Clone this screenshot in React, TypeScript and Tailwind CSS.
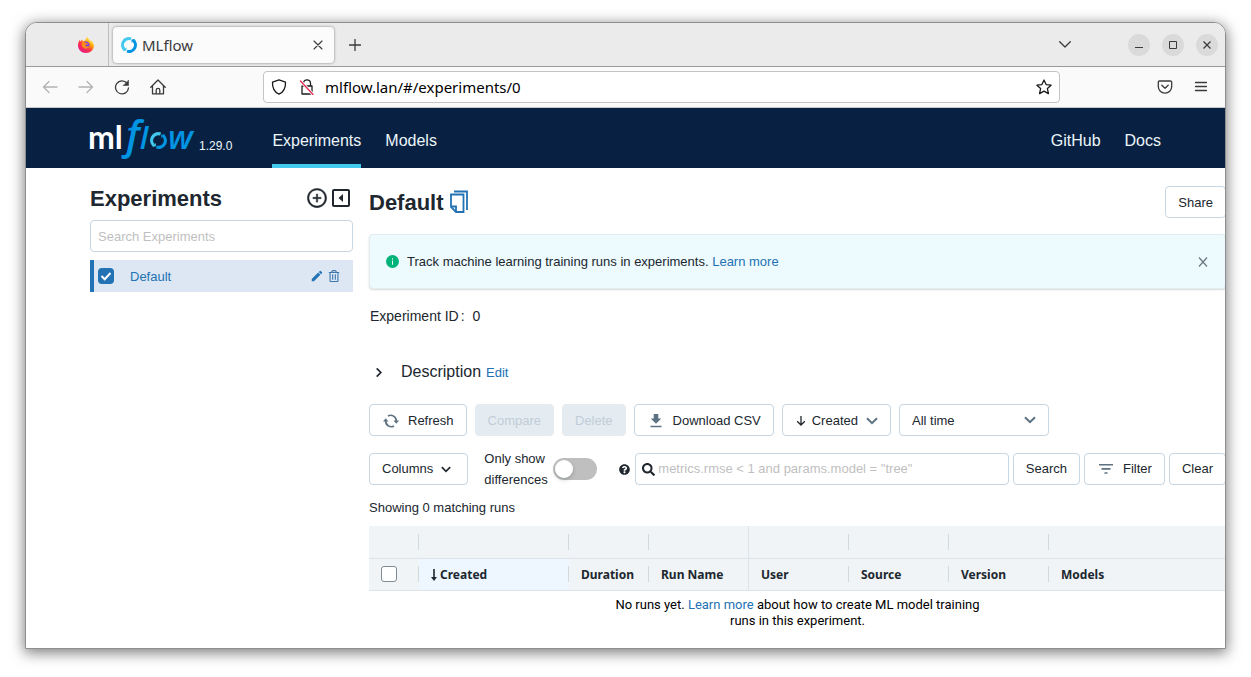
import React from "react";
import { AiOutlinePlusCircle } from "react-icons/ai";
import { FaQuestionCircle, FaRegTrashAlt, FaSearch } from "react-icons/fa";
import { MdEdit } from "react-icons/md";

type IconProps = { className?: string };

const stroke = {
  fill: "none",
  stroke: "currentColor",
  strokeLinecap: "round",
  strokeLinejoin: "round",
} as const;

function FirefoxLogo() {
  return (
    <svg viewBox="0 0 32 32" className="size-4" aria-hidden="true">
      <defs>
        <linearGradient id="ff-body" x1="0.85" y1="0.1" x2="0.2" y2="0.95">
          <stop offset="0.05" stopColor="#fff44f" />
          <stop offset="0.35" stopColor="#ff980e" />
          <stop offset="0.6" stopColor="#ff3647" />
          <stop offset="1" stopColor="#e31587" />
        </linearGradient>
      </defs>
      <path
        d="M30 12c-1-3-3-5-5-6 1 2 1 3 1 4C24 5 20 4 19 0c-3 2-4 5-4 7-2 0-4 1-5 2-1-1-1-3-1-4-2 1-3 3-4 4-1-1-1-3-1-4C1 9 0 13 0 17c0 8 7 15 16 15s16-7 16-15c0-2-1-4-2-5z"
        fill="url(#ff-body)"
      />
      <circle cx="16" cy="16" r="7" fill="#7542e5" />
      <path d="M8 11c3-2 6-1 8 1l5 1c-1 2-3 2-5 2-2 1-1 4 2 4 2 0 3-1 5-1-1 4-5 6-9 5-5-1-8-6-6-12z" fill="#ff8a16" />
    </svg>
  );
}

function RingShapes() {
  return (
    <>
      <g fill="none" strokeWidth="6">
        <path d="M7.500 25.500A12.700 12.700 0 0 1 20 3.900" stroke="#43c9ed" />
        <path d="M24.500 6.500A12.700 12.700 0 0 1 12 28.100" stroke="#0194e2" />
      </g>
      <path d="M11 20.500v6.500l-6.500 1z" fill="#43c9ed" />
      <path d="M21 11.500V5l6.500-1z" fill="#0194e2" />
    </>
  );
}

function MlflowRing({ className }: IconProps) {
  return (
    <svg viewBox="0 0 32 32" className={className} aria-hidden="true">
      <RingShapes />
    </svg>
  );
}

function MlflowWordmark() {
  return (
    <svg viewBox="0 0 106 44" className="h-11 w-[106px] overflow-visible" role="img" aria-label="mlflow">
      <text x="-2" y="33" fontFamily="Lato, sans-serif" fontWeight="700" fontSize="32" fill="#fff">
        ml
      </text>
      <g fontFamily="'Open Sans', sans-serif" fontStyle="italic" fontWeight="600" fill="#0194e2">
        <text x="36" y="33">
          <tspan fontSize="40">f</tspan>
          <tspan fontSize="31">l</tspan>
        </text>
        <text x="78" y="33" fontSize="33">
          w
        </text>
      </g>
      <svg x="60" y="16" width="17" height="17" viewBox="0 0 32 32">
        <RingShapes />
      </svg>
    </svg>
  );
}

function CopyIcon() {
  return (
    <svg viewBox="0 0 20 24" className="h-6 w-5" fill="none" stroke="#2272b4" strokeWidth="1.8" aria-hidden="true">
      <path d="M5 1.500h13V20" />
      <path d="M2 4.500h12.500v17.500H7l-5-5z" />
      <path d="M2 16.500h5V22" />
    </svg>
  );
}

function RefreshIcon() {
  return (
    <svg viewBox="0 0 16 14" className="h-3.5 w-4" aria-hidden="true">
      <g fill="none" stroke="#5f7281" strokeWidth="1.7">
        <path d="M5 2A5.600 5.600 0 0 1 13.300 7" />
        <path d="M11 12A5.600 5.600 0 0 1 2.700 7" />
      </g>
      <path d="M10.500 6.500H16L13.300 9.800zM0 7.500h5.500L2.700 4.200z" fill="#5f7281" />
    </svg>
  );
}

function DownloadIcon() {
  return (
    <svg viewBox="0 0 12 14" className="h-3.5 w-3" fill="#5f7281" aria-hidden="true">
      <path d="M3.700 0h4.600v4.500h3L6 9.800.7 4.500h3zM.5 11.700h11v1.600H.5z" />
    </svg>
  );
}

function FilterIcon() {
  return (
    <svg viewBox="0 0 14 10" className="h-2.5 w-3.5" fill="#5f7281" aria-hidden="true">
      <path d="M0 0h14v1.600H0zM2.500 4h9v1.700h-9zM5.500 8.200h3v1.600h-3z" />
    </svg>
  );
}

function Chevron({ className }: IconProps) {
  return (
    <svg viewBox="0 0 12 8" className={className} {...stroke} strokeWidth="2" strokeLinecap="butt" strokeLinejoin="miter" aria-hidden="true">
      <path d="M1 1.200l5 5 5-5" />
    </svg>
  );
}

function NavIcon({ children, className }: { children: React.ReactNode; className?: string }) {
  return (
    <svg viewBox="0 0 16 16" className={`size-4 ${className ?? ""}`} {...stroke} strokeWidth="1.3" aria-hidden="true">
      {children}
    </svg>
  );
}

function TabStrip() {
  return (
    <div className="flex h-11 items-center border-b border-[#9a9a9a] bg-[#ebebeb] pr-[7px] text-[#3a3a3a]">
      <div className="flex h-full w-[83px] items-center justify-end border-r border-[#bdbdbd] pr-[14px]">
        <FirefoxLogo />
      </div>
      <div className="ml-1 flex h-9 w-[221px] items-center rounded bg-[#fbfbfb] px-2 shadow-[0_0_3px_rgba(0,0,0,0.45)]">
        <MlflowRing className="size-4" />
        <span className="ml-[5px] flex-1 pt-px font-['Noto_Sans',sans-serif] text-[15px]">MLflow</span>
        <button aria-label="Close tab" className="grid size-4 place-items-center">
          <svg viewBox="0 0 10 10" className="size-2.5" {...stroke} strokeWidth="1.1">
            <path d="M1 1l8 8M9 1l-8 8" />
          </svg>
        </button>
      </div>
      <button aria-label="New tab" className="ml-[13px] grid size-4 place-items-center">
        <svg viewBox="0 0 12 12" className="size-3" {...stroke} strokeWidth="1.3">
          <path d="M6 .5v11M.5 6h11" />
        </svg>
      </button>
      <button aria-label="List all tabs" className="mr-[57px] ml-auto">
        <svg viewBox="0 0 12 7" className="h-[7px] w-3" {...stroke} strokeWidth="1.3">
          <path d="M.7.7L6 6l5.300-5.300" />
        </svg>
      </button>
      <div className="flex gap-3">
        <button aria-label="Minimize" className="grid size-[22px] place-items-center rounded-full bg-[#dadada]">
          <svg viewBox="0 0 8 8" className="size-2" stroke="currentColor">
            <path d="M0 6.500h8" />
          </svg>
        </button>
        <button aria-label="Maximize" className="grid size-[22px] place-items-center rounded-full bg-[#dadada]">
          <svg viewBox="0 0 8 8" className="size-2" fill="none" stroke="currentColor">
            <path d="M.5.5h7v7h-7z" />
          </svg>
        </button>
        <button aria-label="Close window" className="grid size-[22px] place-items-center rounded-full bg-[#dadada]">
          <svg viewBox="0 0 8 8" className="size-2" fill="none" stroke="currentColor" strokeWidth="1.300">
            <path d="M.5.5l7 7M7.500.5l-7 7" />
          </svg>
        </button>
      </div>
    </div>
  );
}

function Toolbar() {
  return (
    <div className="flex h-[41px] items-center border-b border-[#c9c9c9] bg-[#fafafa] px-4 text-[#3a3a3a]">
      <div className="flex gap-5">
        <button aria-label="Back" className="text-[#b3b3b3]">
          <NavIcon><path d="M15 8H1.500M7 2.500L1.500 8 7 13.500" /></NavIcon>
        </button>
        <button aria-label="Forward" className="text-[#b3b3b3]">
          <NavIcon><path d="M1 8h13.500M9 2.500L14.500 8 9 13.500" /></NavIcon>
        </button>
        <button aria-label="Reload">
          <NavIcon>
            <path d="M14.500 9A6.500 6.500 0 1 1 13 4.200" />
            <path d="M14.500 1.500v5h-5z" fill="currentColor" strokeWidth="0.6" />
          </NavIcon>
        </button>
        <button aria-label="Home">
          <NavIcon>
            <path d="M.8 8.200L8 1l7.200 7.200M2.500 6.800v8h11v-8" />
            <path d="M6.200 14.600v-3.400a1.800 1.800 0 0 1 3.600 0v3.400" />
          </NavIcon>
        </button>
      </div>
      <div className="mx-[97px] flex h-8 flex-1 items-center rounded border border-[#c4c4c4] bg-white px-[7px] text-[#1b1b1b]">
        <NavIcon>
          <path d="M8 .8l6.500 2.400c.3 5.500-2 9.800-6.500 12C3.500 13 1.200 8.700 1.500 3.200z" />
        </NavIcon>
        <NavIcon className="ml-3">
          <path d="M4.500 6.500V4.300a3.500 3.500 0 0 1 7 0v2.200M3 7h10v8H3z" />
          <path d="M1.500 2L14 15.500" stroke="#fff" strokeWidth="3" />
          <path d="M1.500 2L14 15.500" stroke="#e22850" />
        </NavIcon>
        <input
          aria-label="Address"
          defaultValue="mlflow.lan/#/experiments/0"
          className="ml-[10px] min-w-0 flex-1 bg-transparent font-['Noto_Sans',sans-serif] text-[15px] text-black outline-none"
        />
        <button aria-label="Bookmark this page">
          <NavIcon>
            <path d="M8 1l2.100 4.600 5 .6-3.700 3.400 1 5L8 12.100l-4.400 2.500 1-5L.9 6.200l5-.6z" />
          </NavIcon>
        </button>
      </div>
      <div className="flex gap-5">
        <button aria-label="Save to Pocket">
          <NavIcon>
            <path d="M2.500 2h11a1.200 1.200 0 0 1 1.200 1.200v4.300a6.700 6.700 0 0 1-13.400 0V3.200A1.200 1.200 0 0 1 2.500 2z" />
            <path d="M4.800 6.300L8 9.300l3.200-3" />
          </NavIcon>
        </button>
        <button aria-label="Open application menu">
          <NavIcon><path d="M2.500 3.500h11M2.500 7.500h11M2.500 11.500h11" /></NavIcon>
        </button>
      </div>
    </div>
  );
}

function AppHeader() {
  return (
    <header className="flex h-[60px] bg-[#082142] px-16 text-[16px] text-[#edf6fb]">
      <a href="#/" className="flex pt-2">
        <MlflowWordmark />
        <span className="ml-[3px] pt-[21px] text-[12px] leading-[18px]">1.29.0</span>
      </a>
      <nav className="ml-10 flex flex-1 gap-6 leading-6">
        <a href="#/experiments/0" className="flex items-center border-b-4 border-[#43c9ed] pt-[10px]">Experiments</a>
        <a href="#/models" className="flex items-center pt-[6px]">Models</a>
        <a href="#github" className="ml-auto flex items-center pt-[6px]">GitHub</a>
        <a href="#docs" className="flex items-center pt-[6px]">Docs</a>
      </nav>
    </header>
  );
}

function Sidebar() {
  return (
    <aside className="w-[263px] shrink-0 pt-4">
      <div className="flex h-7 items-center">
        <h2 className="flex-1 pt-px text-[22px] leading-7 font-bold">Experiments</h2>
        <button aria-label="New experiment">
          <AiOutlinePlusCircle className="size-[22px]" strokeWidth="20" />
        </button>
        <button aria-label="Hide experiment list" className="mr-[3px] ml-1">
          <svg viewBox="0 0 18 18" className="size-[18px]" aria-hidden="true">
            <rect x="1" y="1" width="16" height="16" rx="1" fill="none" stroke="currentColor" strokeWidth="2" />
            <path d="M11 5v8L6.500 9z" fill="currentColor" />
          </svg>
        </button>
      </div>
      <input
        aria-label="Search Experiments"
        placeholder="Search Experiments"
        className="mt-2 block h-8 w-full rounded border border-[#c6d6e2] px-[7px] placeholder:text-[#bfbfbf]"
      />
      <div className="mt-2 flex h-8 items-center border-l-4 border-[#2272b4] bg-[#dce7f3] pr-[13px] pl-1 text-[#2272b4]">
        <span className="relative grid size-4">
          <input
            id="exp-default"
            type="checkbox"
            defaultChecked
            className="size-4 appearance-none rounded bg-[#2272b4]"
          />
          <svg viewBox="0 0 16 16" className="pointer-events-none absolute inset-0 size-4" fill="none" stroke="#fff" strokeWidth="2">
            <path d="M3.500 8l3.200 3.200L12.500 5" />
          </svg>
        </span>
        <label htmlFor="exp-default" className="ml-4 flex-1 pt-[2px]">Default</label>
        <button aria-label="Rename experiment"><MdEdit className="size-[14px]" /></button>
        <button aria-label="Delete experiment" className="ml-1 text-[#3f78ae]"><FaRegTrashAlt className="size-3" /></button>
      </div>
    </aside>
  );
}

const button =
  "flex h-8 shrink-0 items-center justify-center whitespace-nowrap rounded border border-[#c6d6e2] bg-white px-3";
const disabledButton =
  "flex h-8 shrink-0 items-center justify-center rounded border border-[#e4ebf1] bg-[#e4ebf1] px-3 text-[#c0cdd8]";

function Alert() {
  return (
    <div className="mt-[15px] flex h-[55px] items-center rounded border border-[#e3ecef] bg-[#edfafe] pr-[17px] pl-4 shadow-[0_1px_2px_rgba(0,0,0,0.15)]">
      <svg viewBox="0 0 14 14" className="size-[13px]" aria-hidden="true">
        <circle cx="7" cy="7" r="7" fill="#00b379" />
        <path d="M6.500 3.500h1v1.300h-1zM6.500 6h1v4.500h-1z" fill="#fff" />
      </svg>
      <p className="ml-2 flex-1">
        Track machine learning training runs in experiments.{" "}
        <a href="#learn" className="text-[#2272b4]">Learn more</a>
      </p>
      <button aria-label="Dismiss" className="text-[#6b7780]">
        <svg viewBox="0 0 10 10" className="size-2.5" fill="none" stroke="currentColor" strokeWidth="1.200">
          <path d="M1 .5l8 9M9 .5l-8 9" />
        </svg>
      </button>
    </div>
  );
}

function RunControls() {
  return (
    <>
      <div className="mt-5 flex gap-2">
        <button className={`${button} pt-px pl-[13px]`}>
          <RefreshIcon />
          <span className="ml-[9px]">Refresh</span>
        </button>
        <button disabled className={`${disabledButton} pt-px`}>Compare</button>
        <button disabled className={`${disabledButton} pt-px`}>Delete</button>
        <button className={`${button} pt-px pl-[15px]`}>
          <DownloadIcon />
          <span className="ml-[11px]">Download CSV</span>
        </button>
        <button className={`${button} pt-px pl-[13px]`}>
          <svg viewBox="0 0 10 10" className="size-2.5" fill="none" stroke="currentColor" strokeWidth="1.300" aria-hidden="true">
            <path d="M5 0v9M1.200 5.200L5 9l3.800-3.800" />
          </svg>
          <span className="ml-[6px]">Created</span>
          <Chevron className="ml-2 h-2 w-3 text-[#5f7281]" />
        </button>
        <div className="relative w-[150px]">
          <select aria-label="Start time" className="h-8 w-full appearance-none rounded border border-[#c6d6e2] bg-white px-3 pt-px">
            <option>All time</option>
          </select>
          <Chevron className="pointer-events-none absolute top-3 right-[13px] h-2 w-3 text-[#5f7281]" />
        </div>
      </div>
      <div className="mt-[17px] flex h-8 items-center gap-1">
        <button className={`${button} pr-4`}>
          Columns
          <Chevron className="ml-2 h-[7px] w-2.5" />
        </button>
        <label htmlFor="diff" className="ml-3 w-[65px] leading-[21px]">Only show differences</label>
        <span className="relative flex h-[22px] w-11 shrink-0">
          <input
            id="diff"
            type="checkbox"
            role="switch"
            className="h-[22px] w-11 appearance-none rounded-full bg-[#bfbfbf]"
          />
          <span className="pointer-events-none absolute top-[2px] left-[2px] size-[18px] rounded-full bg-white shadow-[0_2px_4px_rgba(0,35,11,0.2)]" />
        </span>
        <FaQuestionCircle className="ml-[18px] size-[11px] shrink-0" />
        <div className="ml-px flex h-8 min-w-0 flex-1 items-center rounded border border-[#c6d6e2] pl-[6px]">
          <FaSearch className="size-[13px] shrink-0" />
          <input
            aria-label="Search runs"
            placeholder={'metrics.rmse < 1 and params.model = "tree"'}
            className="ml-[3px] min-w-0 flex-1 outline-none placeholder:text-[#bfbfbf]"
          />
        </div>
        <button className={button}>Search</button>
        <button className={`${button} pl-[14px]`}>
          <FilterIcon />
          <span className="ml-[10px]">Filter</span>
        </button>
        <button className={button}>Clear</button>
      </div>
    </>
  );
}

const divider = "absolute right-0 top-1/2 h-4 w-px -translate-y-1/2 bg-[#d3dade]";
const edgeDivider = "absolute inset-y-0 right-0 w-px bg-[#dde3e6]";

const columns: { name: string; sorted?: boolean; edge?: boolean }[] = [
  { name: "Created", sorted: true },
  { name: "Duration" },
  { name: "Run Name", edge: true },
  { name: "User" },
  { name: "Source" },
  { name: "Version" },
  { name: "Models" },
];

function RunsTable() {
  const last = columns.length - 1;
  return (
    <table className="mt-2 w-full table-fixed border-collapse font-['Noto_Sans',sans-serif]">
      <colgroup>
        <col className="w-[50px]" />
        <col className="w-[150px]" />
        <col className="w-[80px]" />
        <col className="w-[100px]" />
        <col className="w-[100px]" />
        <col className="w-[100px]" />
        <col className="w-[100px]" />
        <col />
      </colgroup>
      <thead className="bg-[#f0f4f7] text-left text-[12px] leading-[18px] text-[#20272e]">
        <tr className="h-8 border-b border-[#dde3e6]">
          <td className="relative"><span className={divider} /></td>
          {columns.map((c, i) => (
            <td key={c.name} className="relative">
              {i < last && <span className={c.edge ? edgeDivider : divider} />}
            </td>
          ))}
        </tr>
        <tr className="h-8 border-b border-[#dde3e6]">
          <th className="relative p-0 pl-3">
            <input
              type="checkbox"
              aria-label="Select all runs"
              className="block size-4 appearance-none rounded-[3px] border border-[#7f8c94] bg-white"
            />
            <span className={divider} />
          </th>
          {columns.map((c, i) => (
            <th
              key={c.name}
              scope="col"
              className={`relative p-0 pt-[2px] pl-3 font-bold whitespace-nowrap ${c.sorted ? "bg-[#eef7ff]" : ""}`}
            >
              <span className="flex items-center">
                {c.sorted && (
                  <svg viewBox="0 0 6 12" className="mr-[3px] h-3 w-[6px]" aria-hidden="true">
                    <path d="M2.200 0h1.600v8H6l-3 4-3-4h2.200z" fill="currentColor" />
                  </svg>
                )}
                {c.name}
              </span>
              {i < last && <span className={c.edge ? edgeDivider : divider} />}
            </th>
          ))}
        </tr>
      </thead>
      <tbody>
        <tr>
          <td colSpan={8} className="px-0 pt-[6px] text-center font-[Roboto,sans-serif] text-[13px] leading-4 text-black">
            <p className="mx-auto w-[380px]">
              No runs yet. <a href="#learn-runs" className="text-[#2272b4]">Learn more</a> about how to create ML model
              training runs in this experiment.
            </p>
          </td>
        </tr>
      </tbody>
    </table>
  );
}

export default function App() {
  return (
    <div className="flex min-h-screen flex-col bg-white px-[25px] pt-[22px] pb-7">
      <div className="flex flex-1 flex-col overflow-hidden rounded-t-[12px] border border-[#8e8e8e] bg-white shadow-[0_3px_14px_1px_rgba(0,0,0,0.5)]">
        <TabStrip />
        <Toolbar />
        <div className="flex-1 font-['Liberation_Sans',Arial,sans-serif] text-[13px] leading-5 text-[#20272e]">
          <AppHeader />
          <div className="flex gap-4 pl-16">
            <Sidebar />
            <main className="-mr-px min-w-0 flex-1 pt-[17px]">
              <div className="flex items-center">
                <h1 className="pt-[2px] text-[22px] leading-8 font-bold">Default</h1>
                <button aria-label="Copy experiment name" className="ml-[5px]">
                  <CopyIcon />
                </button>
                <button className={`${button} ml-auto pt-px`}>Share</button>
              </div>
              <Alert />
              <p className="mt-4 pl-px text-[14px] leading-[22px]">
                Experiment ID<span className="ml-[2px]">:</span>
                <span className="ml-2">0</span>
              </p>
              <div className="mt-[33px] flex h-6 items-center">
                <button aria-label="Expand description" className="ml-1 grid size-3 place-items-center">
                  <Chevron className="h-[7px] w-2.5 -rotate-90" />
                </button>
                <span className="ml-4 text-[16px]">Description</span>
                <button className="ml-[5px] pt-[2px] text-[#2272b4]">Edit</button>
              </div>
              <RunControls />
              <p className="mt-[12px] leading-[21px]">Showing 0 matching runs</p>
              <RunsTable />
            </main>
          </div>
        </div>
      </div>
    </div>
  );
}
